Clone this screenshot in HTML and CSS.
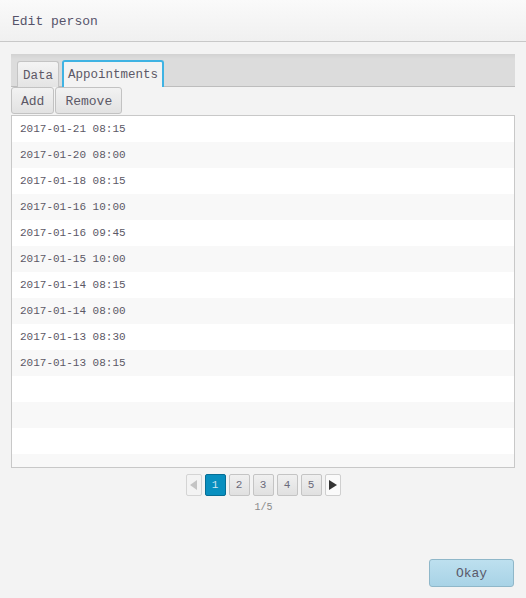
FILE: index.html
```html
<!DOCTYPE html>
<html>
<head>
<meta charset="utf-8">
<link rel="stylesheet" href="styles.css">
</head>
<body>
<div class="dialog">
  <div class="header">Edit person</div>
  <div class="content">
    <div class="tabbar">
      <div class="tab">Data</div>
      <div class="tab active">Appointments</div>
    </div>
    <div class="toolbar">
      <button class="btn">Add</button>
      <button class="btn">Remove</button>
    </div>
    <div class="list">
      <div class="row">2017-01-21 08:15</div>
      <div class="row">2017-01-20 08:00</div>
      <div class="row">2017-01-18 08:15</div>
      <div class="row">2017-01-16 10:00</div>
      <div class="row">2017-01-16 09:45</div>
      <div class="row">2017-01-15 10:00</div>
      <div class="row">2017-01-14 08:15</div>
      <div class="row">2017-01-14 08:00</div>
      <div class="row">2017-01-13 08:30</div>
      <div class="row">2017-01-13 08:15</div>
      <div class="row"></div>
      <div class="row"></div>
      <div class="row"></div>
      <div class="row"></div>
    </div>
    <div class="pager">
      <div class="pg arrow disabled"><svg width="8" height="10" viewBox="0 0 8 10"><path d="M7 0 L7 10 L0 5 Z" fill="#c4c4c4"/></svg></div>
      <div class="pg current">1</div>
      <div class="pg">2</div>
      <div class="pg">3</div>
      <div class="pg">4</div>
      <div class="pg">5</div>
      <div class="pg arrow"><svg width="8" height="10" viewBox="0 0 8 10"><path d="M0 0 L0 10 L8 5 Z" fill="#333"/></svg></div>
    </div>
    <div class="pageinfo">1/5</div>
  </div>
  <div class="footer">
    <button class="okay">Okay</button>
  </div>
</div>
</body>
</html>
```
FILE: styles.css
```css
html, body {
  margin: 0;
  padding: 0;
  background: #f3f3f3;
}
body {
  font-family: "Liberation Mono", "Courier New", monospace;
  color: #5c5866;
}
.dialog {
  width: 526px;
  height: 598px;
  display: flex;
  flex-direction: column;
}
.header {
  height: 42px;
  box-sizing: border-box;
  border-bottom: 1px solid #c8c8c8;
  background: linear-gradient(#fafafa, #f0f0f0);
  padding: 14px 0 0 12px;
  font-size: 13px;
  color: #56536a;
}
.content {
  padding: 12px 11px 0 11px;
  flex: 1;
}
.tabbar {
  height: 33px;
  box-sizing: border-box;
  background: linear-gradient(#d2d2d2, #dcdcdc 5px);
  border-bottom: 1px solid #bdbdbd;
  display: flex;
  align-items: flex-end;
  padding-left: 6px;
  gap: 3px;
}
.tab {
  height: 26px;
  box-sizing: border-box;
  margin-bottom: -1px;
  border: 1px solid #c4c4c4;
  border-bottom: none;
  border-radius: 3px 3px 0 0;
  background: linear-gradient(#f4f4f4, #e4e4e4);
  font-size: 12.5px;
  padding: 7px 5px 0 5px;
  color: #5c5866;
}
.tab.active {
  border: 2px solid #3fb3e3;
  border-bottom: none;
  background: #f3f3f3;
  height: 27px;
  padding: 6px 4px 0 4px;
}
.toolbar {
  display: flex;
  gap: 1px;
  height: 28px;
  align-items: flex-start;
}
.btn {
  font-family: inherit;
  font-size: 13px;
  color: #5c5866;
  height: 27px;
  padding: 1px 9px 0 9px;
  border: 1px solid #c2c2c2;
  border-radius: 3px;
  background: linear-gradient(#f2f2f2, #e2e2e2);
  margin: 0;
}
.list {
  height: 353px;
  box-sizing: border-box;
  border: 1px solid #c8c8c8;
  background: #fff;
  overflow: hidden;
}
.row {
  height: 26px;
  line-height: 27px;
  padding-left: 8px;
  font-size: 11px;
  color: #5c5866;
}
.row:nth-child(even) {
  background: #f8f8f8;
}
.pager {
  display: flex;
  justify-content: center;
  gap: 3px;
  margin-top: 6px;
  height: 22px;
}
.pg {
  width: 21px;
  height: 22px;
  box-sizing: border-box;
  border: 1px solid #c4c4c4;
  border-radius: 2px;
  background: linear-gradient(#f0f0f0, #e0e0e0);
  font-size: 11px;
  line-height: 21px;
  text-align: center;
  color: #6a6a7a;
}
.pg.arrow {
  width: 16px;
  display: flex;
  align-items: center;
  justify-content: center;
  background: #f3f3f3;
  border-color: #d4d4d4;
}
.pg.arrow:last-child {
  background: #fafafa;
  border-color: #cfcfcf;
}
.pg.current {
  background: #088fbf;
  border-color: #066d94;
  color: #cfe6f0;
}
.pageinfo {
  text-align: center;
  font-size: 10px;
  color: #8a8a8a;
  margin-top: 6px;
  margin-left: 1px;
}
.footer {
  height: 40px;
  display: flex;
  justify-content: flex-end;
  align-items: flex-start;
  padding-right: 12px;
}
.okay {
  font-family: inherit;
  font-size: 13px;
  color: #5a5a6a;
  width: 85px;
  height: 28px;
  margin: 1px 0 0 0;
  padding-top: 1px;
  border: 1px solid #8fb7c9;
  border-radius: 3px;
  background: linear-gradient(#bde0ef, #a8d3e6);
}
```
